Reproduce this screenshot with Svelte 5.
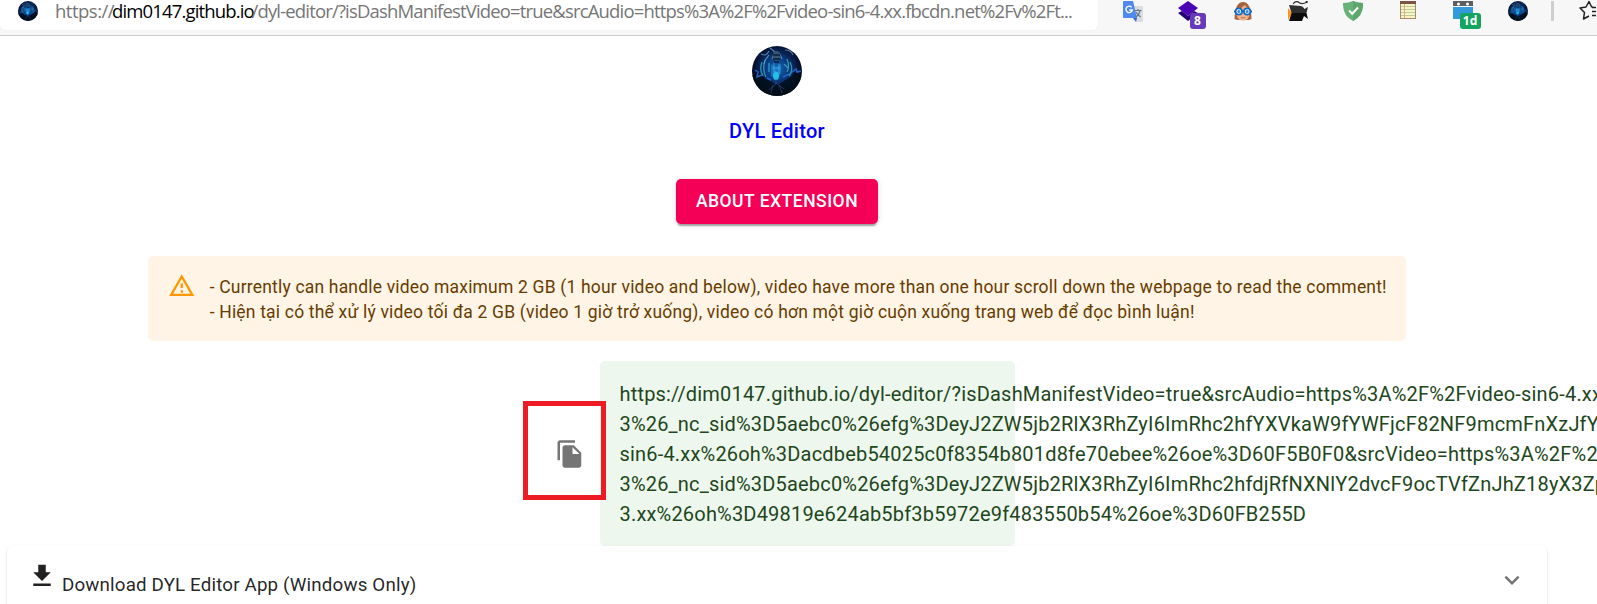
<script>
  const urlLines = [
    'https://dim0147.github.io/dyl-editor/?isDashManifestVideo=true&srcAudio=https%3A%2F%2Fvideo-sin6-4.xx.fbcdn.net%2Fv%2Ft',
    '3%26_nc_sid%3D5aebc0%26efg%3DeyJ2ZW5jb2RlX3RhZyI6ImRhc2hfYXVkaW9fYWFjcF82NF9mcmFnXzJfYXVkaW8',
    'sin6-4.xx%26oh%3Dacdbeb54025c0f8354b801d8fe70ebee%26oe%3D60F5B0F0&srcVideo=https%3A%2F%2Fvideo',
    '3%26_nc_sid%3D5aebc0%26efg%3DeyJ2ZW5jb2RlX3RhZyI6ImRhc2hfdjRfNXNlY2dvcF9ocTVfZnJhZ18yX3ZpZGVv',
    '3.xx%26oh%3D49819e624ab5bf3b5972e9f483550b54%26oe%3D60FB255D'
  ];
</script>

{#snippet avatar(size, id)}
  <svg class="avatar" width={size} height={size} viewBox="0 0 50 50">
    <defs>
      <radialGradient id={id + 'g'} cx="50%" cy="45%" r="52%">
        <stop offset="0" stop-color="#1668b4" />
        <stop offset=".4" stop-color="#0b3f84" />
        <stop offset=".75" stop-color="#071a45" />
        <stop offset="1" stop-color="#030818" />
      </radialGradient>
      <clipPath id={id + 'c'}><circle cx="25" cy="25" r="25" /></clipPath>
      <filter id={id + 'b'}><feGaussianBlur stdDeviation=".6" /></filter>
    </defs>
    <g clip-path="url(#{id}c)">
      <rect width="50" height="50" fill="url(#{id}g)" />
      <g filter="url(#{id}b)">
        <path d="M0 30l8-4 5 7 6 2 3 3 6 0 4-3 7-4 4-5 7 5v20H0z" fill="#030817" opacity=".85" />
        <path d="M20 13q5-14 10 0M9 8q5 3 8-3M33 4q6 0 8 5M18 2l5 4M17 9q-4 4-5 9" fill="none" stroke="#6a9cc4" stroke-width="1.1" opacity=".8" />
        <ellipse cx="24.500" cy="10" rx="4" ry="5" fill="#34566f" />
        <path d="M21 9h7M21 13h7M22 16l5 0" stroke="#071b3c" stroke-width="1.5" />
        <path d="M10 16q-3 8 1 14M13 14q-3 10 1 17M17 17v9M38 16q4 8-1 14M35 13q3 8 0 13M32 18l4 4" fill="none" stroke="#38b0cc" stroke-width="1.3" opacity=".8" />
        <path d="M19 18l5 3 5-3v9l-4 7-6-4z" fill="#1c7bd0" opacity=".7" />
        <path d="M22 17v12M27 18v10M20 22h9M23 25l4 3" stroke="#44c3e6" stroke-width="1" opacity=".65" />
        <ellipse cx="24" cy="30" rx="3" ry="4" fill="#24c9ed" opacity=".9" />
        <path d="M3 24l3 2-1 5 5-2M40 26l4-3 1 3 4-1M15 32l4 2M31 31l6-3" fill="none" stroke="#2063c6" stroke-width="1.5" />
        <path d="M24 33v5l-7 6M24 37l8 6M21 39l-2 8M27 39l3 8" fill="none" stroke="#385d91" stroke-width=".9" opacity=".6" />
      </g>
    </g>
  </svg>
{/snippet}

<div class="page">
  <header class="toolbar">
    <div class="address">
      {@render avatar(20, 'fav')}
      <div class="url"><span class="scheme">https://</span><span class="host">dim0147.github.io</span><span class="path">/dyl-editor/?isDashManifestVideo=true&srcAudio=https%3A%2F%2Fvideo-sin6-4.xx.fbcdn.net%2Fv%2Ft...</span></div>
    </div>
    <div class="extensions">
      <div class="ext">
        <svg width="20" height="21" viewBox="0 0 20 21">
          <path d="M8 5h11q1 0 1 1v14q0 1-1 1h-6z" fill="#dadce0" />
          <path d="M10 17h4l-1 4z" fill="#3367d6" />
          <path d="M1 0h9l4 17H1q-1 0-1-1V1q0-1 1-1z" fill="#5089ee" />
          <path d="M8.600 6.300A3.200 3.200 0 1 0 9.300 9H6.300" fill="none" stroke="#fff" stroke-width="1.400" />
          <path d="M11.500 9.500h7M15 8v1.500M17 10q-1 4-4 6M13 11q1.500 3 4.500 5" fill="none" stroke="#647987" stroke-width="1.200" />
        </svg>
      </div>
      <div class="ext">
        <svg width="20" height="20" viewBox="0 0 20 20">
          <path d="M0 12l4-2 6 5 6-5 4 2-10 8z" fill="#260071" />
          <path d="M0 7l10-7 10 7-10 8z" fill="#4a06b3" />
        </svg>
        <span class="badge purple">8</span>
      </div>
      <div class="ext">
        <svg width="20" height="20" viewBox="0 0 20 20">
          <path d="M1.500 18Q2 1 10 1t8.500 17l-3 1h-11z" fill="#a8623f" />
          <path d="M3.500 9Q9 7 12 4q2 3 4.500 5v5q-1 5.500-6.500 5.500T3.500 14z" fill="#efb38a" />
          <path d="M1 10.500h18" stroke="#1765b5" stroke-width="2" />
          <circle cx="5.800" cy="10.500" r="3.200" fill="#fff" stroke="#176bc5" stroke-width="1.700" />
          <circle cx="14.200" cy="10.500" r="3.200" fill="#fff" stroke="#176bc5" stroke-width="1.700" />
          <circle cx="5.800" cy="10.500" r="1.500" fill="#338fdb" /><circle cx="14.200" cy="10.500" r="1.500" fill="#338fdb" />
          <path d="M8 16.500q2 1 4 0" fill="none" stroke="#ca675c" />
        </svg>
      </div>
      <div class="ext">
        <svg width="20" height="21" viewBox="0 0 20 21">
          <path d="M0 7l4 5-4 7z" fill="#ff9419" />
          <path d="M1 4l12 1 2 1 1.500 2L20 6l-1.500 6H3.500z" fill="#303030" />
          <path d="M3.500 12h15L20 18l-4-3-2 5H1z" fill="#0c0c0c" />
          <path d="M5 3q3-4 6-1.500t8-.5" fill="none" stroke="#333" stroke-width="1.200" /><circle cx="18.700" cy="1" r="1.100" fill="#222" />
        </svg>
      </div>
      <div class="ext">
        <svg width="20" height="20" viewBox="0 0 20 20">
          <path d="M0 2q6-.2 10-2 4 1.800 10 2 .5 13-10 18Q-.5 15 0 2z" fill="#67b279" />
          <path d="M10 0q4 1.800 10 2 .5 13-10 18z" fill="#5da66e" />
          <path d="M6 9.500l3.200 3.200L15 6.500" fill="none" stroke="#fff" stroke-width="2" />
        </svg>
      </div>
      <div class="ext">
        <svg width="16" height="18" viewBox="0 0 16 18">
          <path d="M0 0h16v18H0z" fill="#a58a6e" />
          <path d="M1 2h14v15H1z" fill="#f8f4c4" />
          <path d="M0 1.500h16" stroke="#795548" stroke-width="3" />
          <path d="M1 5.500h14M1 8.500h14M1 11.500h14M1 14.500h14" stroke="#bdcc9c" />
          <path d="M4.500 3v14" stroke="#dcae8d" />
        </svg>
      </div>
      <div class="ext">
        <svg width="20" height="18" viewBox="0 0 20 18">
          <path d="M0 6h20v12H0z" fill="#3498db" />
          <path d="M0 0h20v5H0z" fill="#5c5f62" />
          <circle cx="5.500" cy="3" r="1.500" fill="#fff" /><circle cx="14.500" cy="3" r="1.500" fill="#fff" />
        </svg>
        <span class="badge green">1d</span>
      </div>
      <div class="ext">{@render avatar(20, 'ext')}</div>
    </div>
    <div class="divider"></div>
    <svg class="star" width="17" height="22" viewBox="0 0 17 22">
      <path d="M14 7.200l-1.500-.4L10 1.500 7 7 1 8l4.500 4.500L4.500 19l5.500-3M13 7.500h10M13 11.500h9M13 15.500h9" fill="none" stroke="#222" stroke-width="1.500" stroke-linejoin="round" />
    </svg>
  </header>

  <main>
    {@render avatar(50, 'main')}
    <h1>DYL Editor</h1>
    <button class="about">About Extension</button>

    <div class="alert warning">
      <svg width="27.500" height="27.500" viewBox="0 0 24 24" fill="#ff9800"><path d="M12 5.990L19.530 19H4.470L12 5.990M12 2L1 21h22L12 2zm1 14h-2v2h2v-2zm0-6h-2v4h2v-4z" /></svg>
      <div>- Currently can handle video maximum 2 GB (1 hour video and below), video have more than one hour scroll down the webpage to read the comment!<br />- Hiện tại có thể xử lý video tối đa 2 GB (video 1 giờ trở xuống), video có hơn một giờ cuộn xuống trang web để đọc bình luận!</div>
    </div>

    <section class="link-row">
      <button class="copy" aria-label="Copy">
        <svg width="30" height="30" viewBox="0 0 24 24" fill="#757575"><path d="M16 1H4c-1.100 0-2 .9-2 2v14h2V3h12V1zm-1 4l6 6v10c0 1.100-.9 2-2 2H7.990C6.890 23 6 22.100 6 21l.01-14c0-1.100.89-2 1.990-2h7zm-1 7h5.500L14 6.500V12z" /></svg>
        <span class="highlight"></span>
      </button>
      <div class="link-box">
        {#each urlLines as line}<div>{line}</div>{/each}
      </div>
    </section>

    <section class="accordion">
      <svg class="download" width="30" height="30" viewBox="0 0 24 24" fill="#212121"><path d="M19 9h-4V3H9v6H5l7 7 7-7zM5 18v2h14v-2H5z" /></svg>
      <span>Download DYL Editor App (Windows Only)</span>
      <svg class="chevron" width="30" height="30" viewBox="0 0 24 24" fill="#757575"><path d="M16.590 8.590L12 13.170 7.410 8.590 6 10l6 6 6-6z" /></svg>
    </section>
  </main>
</div>

<style>
  :global(body) { margin: 0; background: #fff; }
  .page { width: 1597px; height: 604px; overflow: hidden; font-family: Roboto, sans-serif; }
  svg { display: block; flex: none; }
  .toolbar { box-sizing: border-box; height: 36px; display: flex; align-items: flex-start; background: #f7f7f7; border-bottom: 1px solid #cecece; }
  .address { box-sizing: border-box; width: 1098px; height: 30px; padding: 1px 0 0 18px; display: flex; background: #fff; border-radius: 0 0 6px 6px; box-shadow: 0 0 3px #eee; flex: none; }
  .url { height: 20px; margin: 0 0 0 17px; font: 18.5px/20px "Open Sans", sans-serif; color: #767676; white-space: pre; display: flex; }
  .scheme { width: 57px; letter-spacing: -0.5px; }
  .host { width: 139.500px; color: #000; letter-spacing: -0.85px; }
  .path { letter-spacing: -0.835px; }
  .extensions { display: grid; grid-template-columns: repeat(8, 55px); margin-left: 7.500px; padding-top: 1px; flex: none; }
  .ext { position: relative; display: flex; justify-content: center; }
  .badge { position: absolute; top: 12px; box-sizing: border-box; height: 16px; border-radius: 3px; color: #fff; font: 700 12px/16px "Open Sans", sans-serif; text-align: center; }
  .purple { left: 29px; width: 16px; background: #673ab7; }
  .green { left: 24px; width: 21px; background: #12a460; }
  .divider { width: 3px; height: 20px; margin: 1px 0 0 5.500px; background: #cecece; flex: none; }
  .star { margin-left: 25px; }
  main { display: flex; flex-direction: column; align-items: center; width: 1554px; padding-top: 10px; }
  h1 { margin: 20px 0 0; font-size: 20px; line-height: 30px; font-weight: 500; letter-spacing: .3px; color: #00f; }
  .about { box-sizing: border-box; width: 202px; height: 45px; margin-top: 33px; padding: 0; border: 0; border-radius: 5px; background: #f50057; color: #fff; font: 500 17.5px/45px Roboto, sans-serif; letter-spacing: .5px; text-transform: uppercase; box-shadow: 0 4px 1px -2px rgba(0,0,0,.2), 0 2px 2px rgba(0,0,0,.14), 0 1px 6px rgba(0,0,0,.12); }
  .alert { box-sizing: border-box; display: flex; width: 1258px; height: 85px; margin-top: 32px; padding: 16.250px 0 0 20px; background: #fff4e5; border-radius: 5px; color: #663c00; font-size: 17.5px; line-height: 25px; letter-spacing: .1875px; white-space: nowrap; }
  .alert div { margin: 2.750px 0 0 14.200px; }
  .link-row { display: flex; align-items: center; height: 185px; margin: 20px 0 0; padding-left: 1px; }
  .copy { position: relative; width: 60px; height: 60px; padding: 15px; border: 0; background: none; }
  .highlight { position: absolute; left: -17px; top: -22.500px; box-sizing: border-box; width: 83px; height: 99px; border: 5px solid #ed1c24; z-index: 1; }
  .link-box { box-sizing: border-box; width: 415px; height: 185px; padding: 17.5px 20px 17.5px 19.500px; background: #edf7ed; border-radius: 5px; color: #1e4620; font-size: 20px; line-height: 30px; letter-spacing: .1876px; white-space: nowrap; }
  .accordion { box-sizing: border-box; align-self: flex-start; display: flex; width: 1540px; height: 80px; margin-left: 7px; padding: 14.500px 20px 0 20px; border-radius: 5px; color: rgba(0,0,0,.87); font-size: 18.75px; line-height: 30px; letter-spacing: .16px; box-shadow: 0 2px 1px -1px rgba(0,0,0,.2), 0 1px 1px rgba(0,0,0,.14), 0 1px 3px rgba(0,0,0,.12); }
  .accordion span { margin: 9.500px 0 0 5px; }
  .chevron { margin: 4px 0 0 auto; }
</style>
